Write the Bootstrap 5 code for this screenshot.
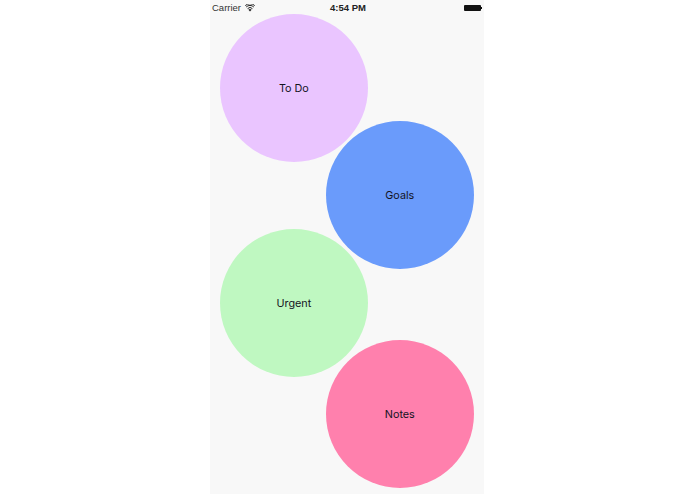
<!DOCTYPE html>
<html lang="en">
<head>
<meta charset="utf-8">
<title>Bubbles</title>
<link href="https://cdn.jsdelivr.net/npm/bootstrap@5.3.0/dist/css/bootstrap.min.css" rel="stylesheet">
<style>
html, body { height: 100%; background: #fff; overflow: hidden; }
.phone-shell { width: 274px; height: 494px; margin-left: 210px; background: #f8f8f8; padding: 0 10px 0 9.7px; font-family: Inter, "Liberation Sans", sans-serif; position: relative; }
.status-strip { position: absolute; top: 1px; left: 2px; right: 2px; height: 14px; font-size: 9.5px; color: #333; z-index: 2; font-family: "Liberation Sans", sans-serif; }
.status-side { width: 90px; }
.status-time { font-weight: 600; font-size: 9.5px; color: #222; margin-left: 2px; }
.bubble-stack { padding-top: 14px; }
.bubble { width: 148.4px; height: 148.4px; font-size: 10.8px; color: #14141f; padding-top: 2px; }
.bubble-todo { background: #eac5ff; }
.bubble-goals { background: #6a9bfb; margin-top: -41.4px; }
.bubble-urgent { background: #bff8c1; margin-top: -40.4px; }
.bubble-notes { background: #ff80ad; margin-top: -37.4px; }
.wifi-mark { margin-left: 0; margin-top: -1px; }
.battery-body { width: 17px; height: 6px; background: #111; border-radius: 1px; }
.battery-tip { width: 1px; height: 2px; background: #111; }
</style>
</head>
<body>
<div class="phone-shell">
  <div class="status-strip d-flex align-items-center justify-content-between">
    <div class="status-side d-flex align-items-center gap-1">
      <span>Carrier</span>
      <svg class="wifi-mark" width="10" height="8" viewBox="0 0 10 8" aria-hidden="true"><path d="M5 7.6 3.4 5.8a2.3 2.3 0 0 1 3.2 0Z" fill="#222"/><path d="M2.6 4.6a3.4 3.4 0 0 1 4.8 0M1.2 3a5.4 5.4 0 0 1 7.6 0M.3 1.6a6.8 6.8 0 0 1 9.4 0" fill="none" stroke="#222" stroke-width="1"/></svg>
    </div>
    <span class="status-time">4:54 PM</span>
    <div class="status-side d-flex align-items-center justify-content-end">
      <span class="battery-body"></span><span class="battery-tip"></span>
    </div>
  </div>
  <div class="bubble-stack d-flex flex-column">
    <div class="bubble bubble-todo rounded-circle d-flex align-items-center justify-content-center align-self-start">To Do</div>
    <div class="bubble bubble-goals rounded-circle d-flex align-items-center justify-content-center align-self-end">Goals</div>
    <div class="bubble bubble-urgent rounded-circle d-flex align-items-center justify-content-center align-self-start">Urgent</div>
    <div class="bubble bubble-notes rounded-circle d-flex align-items-center justify-content-center align-self-end">Notes</div>
  </div>
</div>
<script src="https://cdn.jsdelivr.net/npm/bootstrap@5.3.0/dist/js/bootstrap.bundle.min.js"></script>
</body>
</html>
